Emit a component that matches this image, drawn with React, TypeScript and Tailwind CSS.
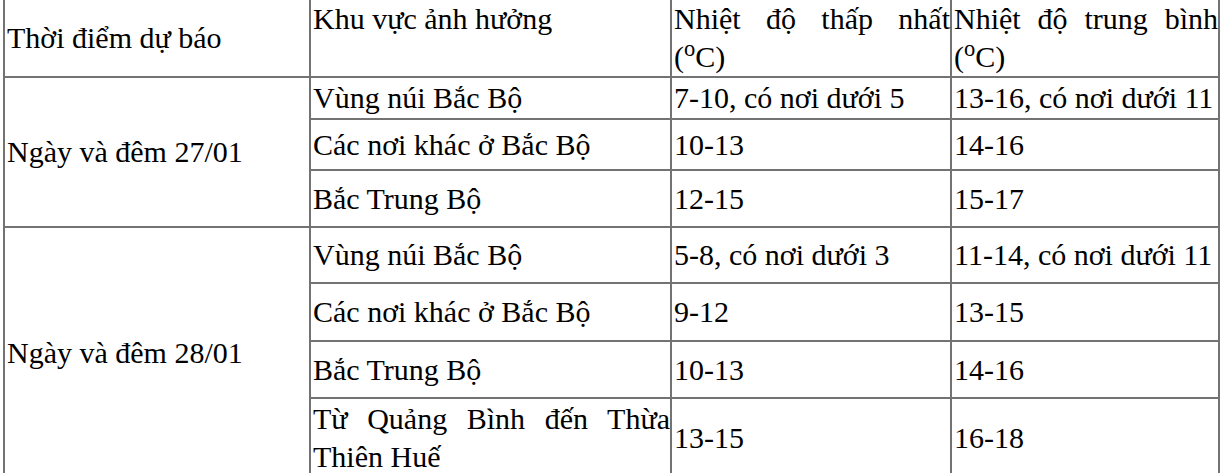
import React from 'react';

interface Row {
  area: React.ReactNode;
  low: string;
  avg: string;
  h: string;
}

interface Group {
  label: string;
  rows: Row[];
}

const groups: Group[] = [
  {
    label: 'Ngày và đêm 27/01',
    rows: [
      { area: 'Vùng núi Bắc Bộ', low: '7-10, có nơi dưới 5', avg: '13-16, có nơi dưới 11', h: 'h-[42px]' },
      { area: 'Các nơi khác ở Bắc Bộ', low: '10-13', avg: '14-16', h: 'h-[51px]' },
      { area: 'Bắc Trung Bộ', low: '12-15', avg: '15-17', h: 'h-[57px]' }
    ]
  },
  {
    label: 'Ngày và đêm 28/01',
    rows: [
      { area: 'Vùng núi Bắc Bộ', low: '5-8, có nơi dưới 3', avg: '11-14, có nơi dưới 11', h: 'h-[56px]' },
      { area: 'Các nơi khác ở Bắc Bộ', low: '9-12', avg: '13-15', h: 'h-[58px]' },
      { area: 'Bắc Trung Bộ', low: '10-13', avg: '14-16', h: 'h-[57px]' },
      { area: 'Từ Quảng Bình đến Thừa Thiên Huế', low: '13-15', avg: '16-18', h: 'h-[80px]' }
    ]
  }
];

const cell = 'border-2 border-[#737373] pl-[2px] pr-0 py-0 text-justify align-middle';

const Unit = () => (
  <span className="inline-block w-full text-left">
    (<sup>o</sup>C)
  </span>
);

export default function App() {
  return (
    <div className="w-[1222px] h-[473px] overflow-hidden bg-white pl-[3px]">
      <table className="table-fixed border-collapse w-[1215px] text-black text-[30px] leading-[38px] font-['Liberation_Serif','Times_New_Roman',serif]">
        <colgroup>
          <col className="w-[306px]" />
          <col className="w-[361px]" />
          <col className="w-[280px]" />
          <col className="w-[268px]" />
        </colgroup>
        <tbody>
          {/* Header */}
          <tr className="h-[77px]">
            <td className={`${cell} border-t-0 text-left`}>Thời điểm dự báo</td>
            <td className={`${cell} border-t-0 !align-top text-left`}>Khu vực ảnh hưởng</td>
            <td className={`${cell} border-t-0 !align-top`}>
              Nhiệt độ thấp nhất <Unit />
            </td>
            <td className={`${cell} border-t-0 !align-top`}>
              Nhiệt độ trung bình <Unit />
            </td>
          </tr>

          {groups.map((g) =>
            g.rows.map((r, i) => (
              <tr key={g.label + i} className={r.h}>
                {i === 0 && (
                  <td rowSpan={g.rows.length} className={`${cell} text-left`}>
                    {g.label}
                  </td>
                )}
                <td className={cell}>{r.area}</td>
                <td className={`${cell} text-left`}>{r.low}</td>
                <td className={`${cell} text-left`}>{r.avg}</td>
              </tr>
            ))
          )}
        </tbody>
      </table>
    </div>
  );
}
